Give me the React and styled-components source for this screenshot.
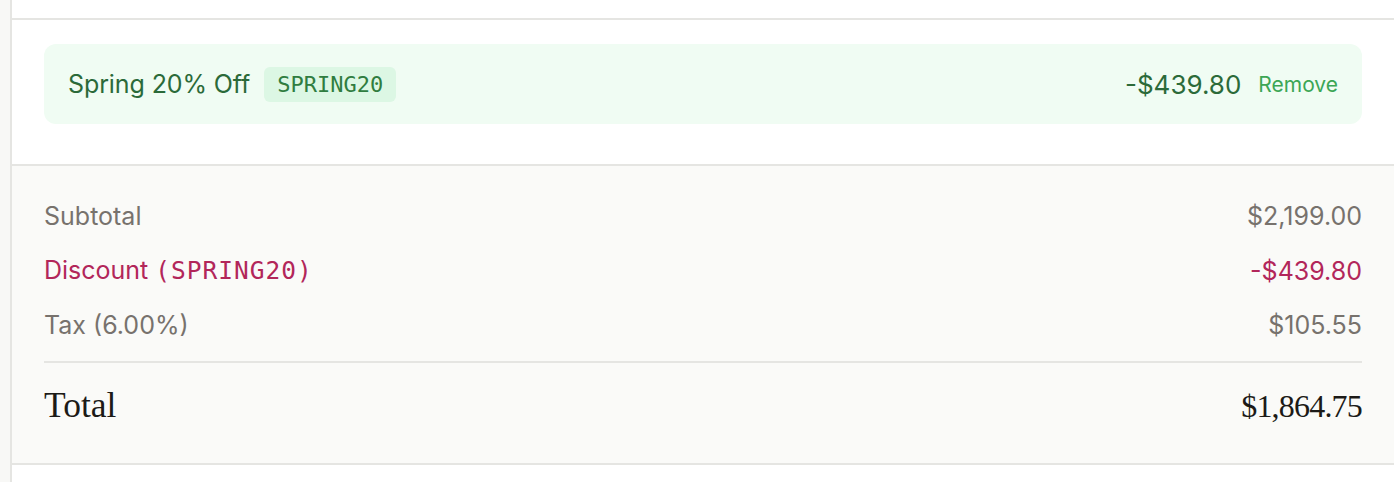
import React from "react";
import styled, { createGlobalStyle } from "styled-components";

const Global = createGlobalStyle`
  html, body { margin: 0; padding: 0; }
  body {
    background: #f8f8f6;
    font-family: Inter, "Noto Sans", "Liberation Sans", sans-serif;
    -webkit-font-smoothing: antialiased;
  }
`;

const Page = styled.div`
  padding-left: 10px;
  min-height: 482px;
`;

const Panel = styled.div`
  background: #ffffff;
  border-left: 2px solid #e5e5e2;
  min-height: 482px;
`;

const TopStrip = styled.div`
  height: 18px;
  border-bottom: 2px solid #e5e5e2;
`;

const PromoSection = styled.section`
  padding: 24px 32px 40px;
  border-bottom: 2px solid #e5e5e2;
`;

const PromoBox = styled.div`
  height: 80px;
  box-sizing: border-box;
  background: #f0fcf3;
  border-radius: 12px;
  padding: 0 24px;
  display: flex;
  align-items: center;
  justify-content: space-between;
`;

const PromoLeft = styled.div`
  display: flex;
  align-items: center;
  gap: 14px;
`;

const PromoName = styled.span`
  font-size: 25px;
  color: #2b6a39;
  letter-spacing: -0.1px;
`;

const CodePill = styled.span`
  display: inline-flex;
  align-items: center;
  height: 35px;
  padding: 0 13px;
  border-radius: 6px;
  background: #dcf7e4;
  color: #2f7d40;
  font-family: "DejaVu Sans Mono", "Liberation Mono", monospace;
  font-size: 22px;
`;

const PromoRight = styled.div`
  display: flex;
  align-items: center;
  gap: 17px;
`;

const PromoAmount = styled.span`
  font-size: 26px;
  color: #2b6a39;
`;

const RemoveButton = styled.button`
  background: none;
  border: 0;
  padding: 0;
  font-family: inherit;
  font-size: 21px;
  color: #3ca655;
  cursor: pointer;
`;

const Summary = styled.section`
  background: #fafaf8;
  padding: 32px 32px 0;
  height: 299px;
  box-sizing: border-box;
  border-bottom: 2px solid #e5e5e2;
`;

const Rows = styled.div`
  display: flex;
  flex-direction: column;
  gap: 18px;
`;

const Row = styled.div`
  display: flex;
  justify-content: space-between;
  align-items: center;
  line-height: 36px;
  font-size: 25px;
  color: ${(p) => (p.$accent ? "#b2265a" : "#77726d")};
`;

const Mono = styled.span`
  font-family: "DejaVu Sans Mono", "Liberation Mono", monospace;
  font-size: 24.5px;
  letter-spacing: 1px;
`;

const TotalRow = styled.div`
  margin-top: 18px;
  border-top: 2px solid #e5e5e2;
  padding-top: 22px;
  display: flex;
  justify-content: space-between;
  align-items: baseline;
  font-family: "Liberation Serif", "DejaVu Serif", serif;
  color: #1c1a17;
  line-height: 40px;
`;

const TotalLabel = styled.span`
  font-size: 35.5px;
`;

const TotalValue = styled.span`
  font-size: 32px;
  letter-spacing: -0.8px;
`;

export default function App() {
  return (
    <>
      <Global />
      <Page>
        <Panel>
          <TopStrip />
          <PromoSection>
            <PromoBox>
              <PromoLeft>
                <PromoName>Spring 20% Off</PromoName>
                <CodePill>SPRING20</CodePill>
              </PromoLeft>
              <PromoRight>
                <PromoAmount>-$439.80</PromoAmount>
                <RemoveButton>Remove</RemoveButton>
              </PromoRight>
            </PromoBox>
          </PromoSection>
          <Summary>
            <Rows>
              <Row>
                <span>Subtotal</span>
                <span>$2,199.00</span>
              </Row>
              <Row $accent>
                <span>
                  Discount <Mono>(SPRING20)</Mono>
                </span>
                <span>-$439.80</span>
              </Row>
              <Row>
                <span>Tax (6.00%)</span>
                <span>$105.55</span>
              </Row>
            </Rows>
            <TotalRow>
              <TotalLabel>Total</TotalLabel>
              <TotalValue>$1,864.75</TotalValue>
            </TotalRow>
          </Summary>
        </Panel>
      </Page>
    </>
  );
}
